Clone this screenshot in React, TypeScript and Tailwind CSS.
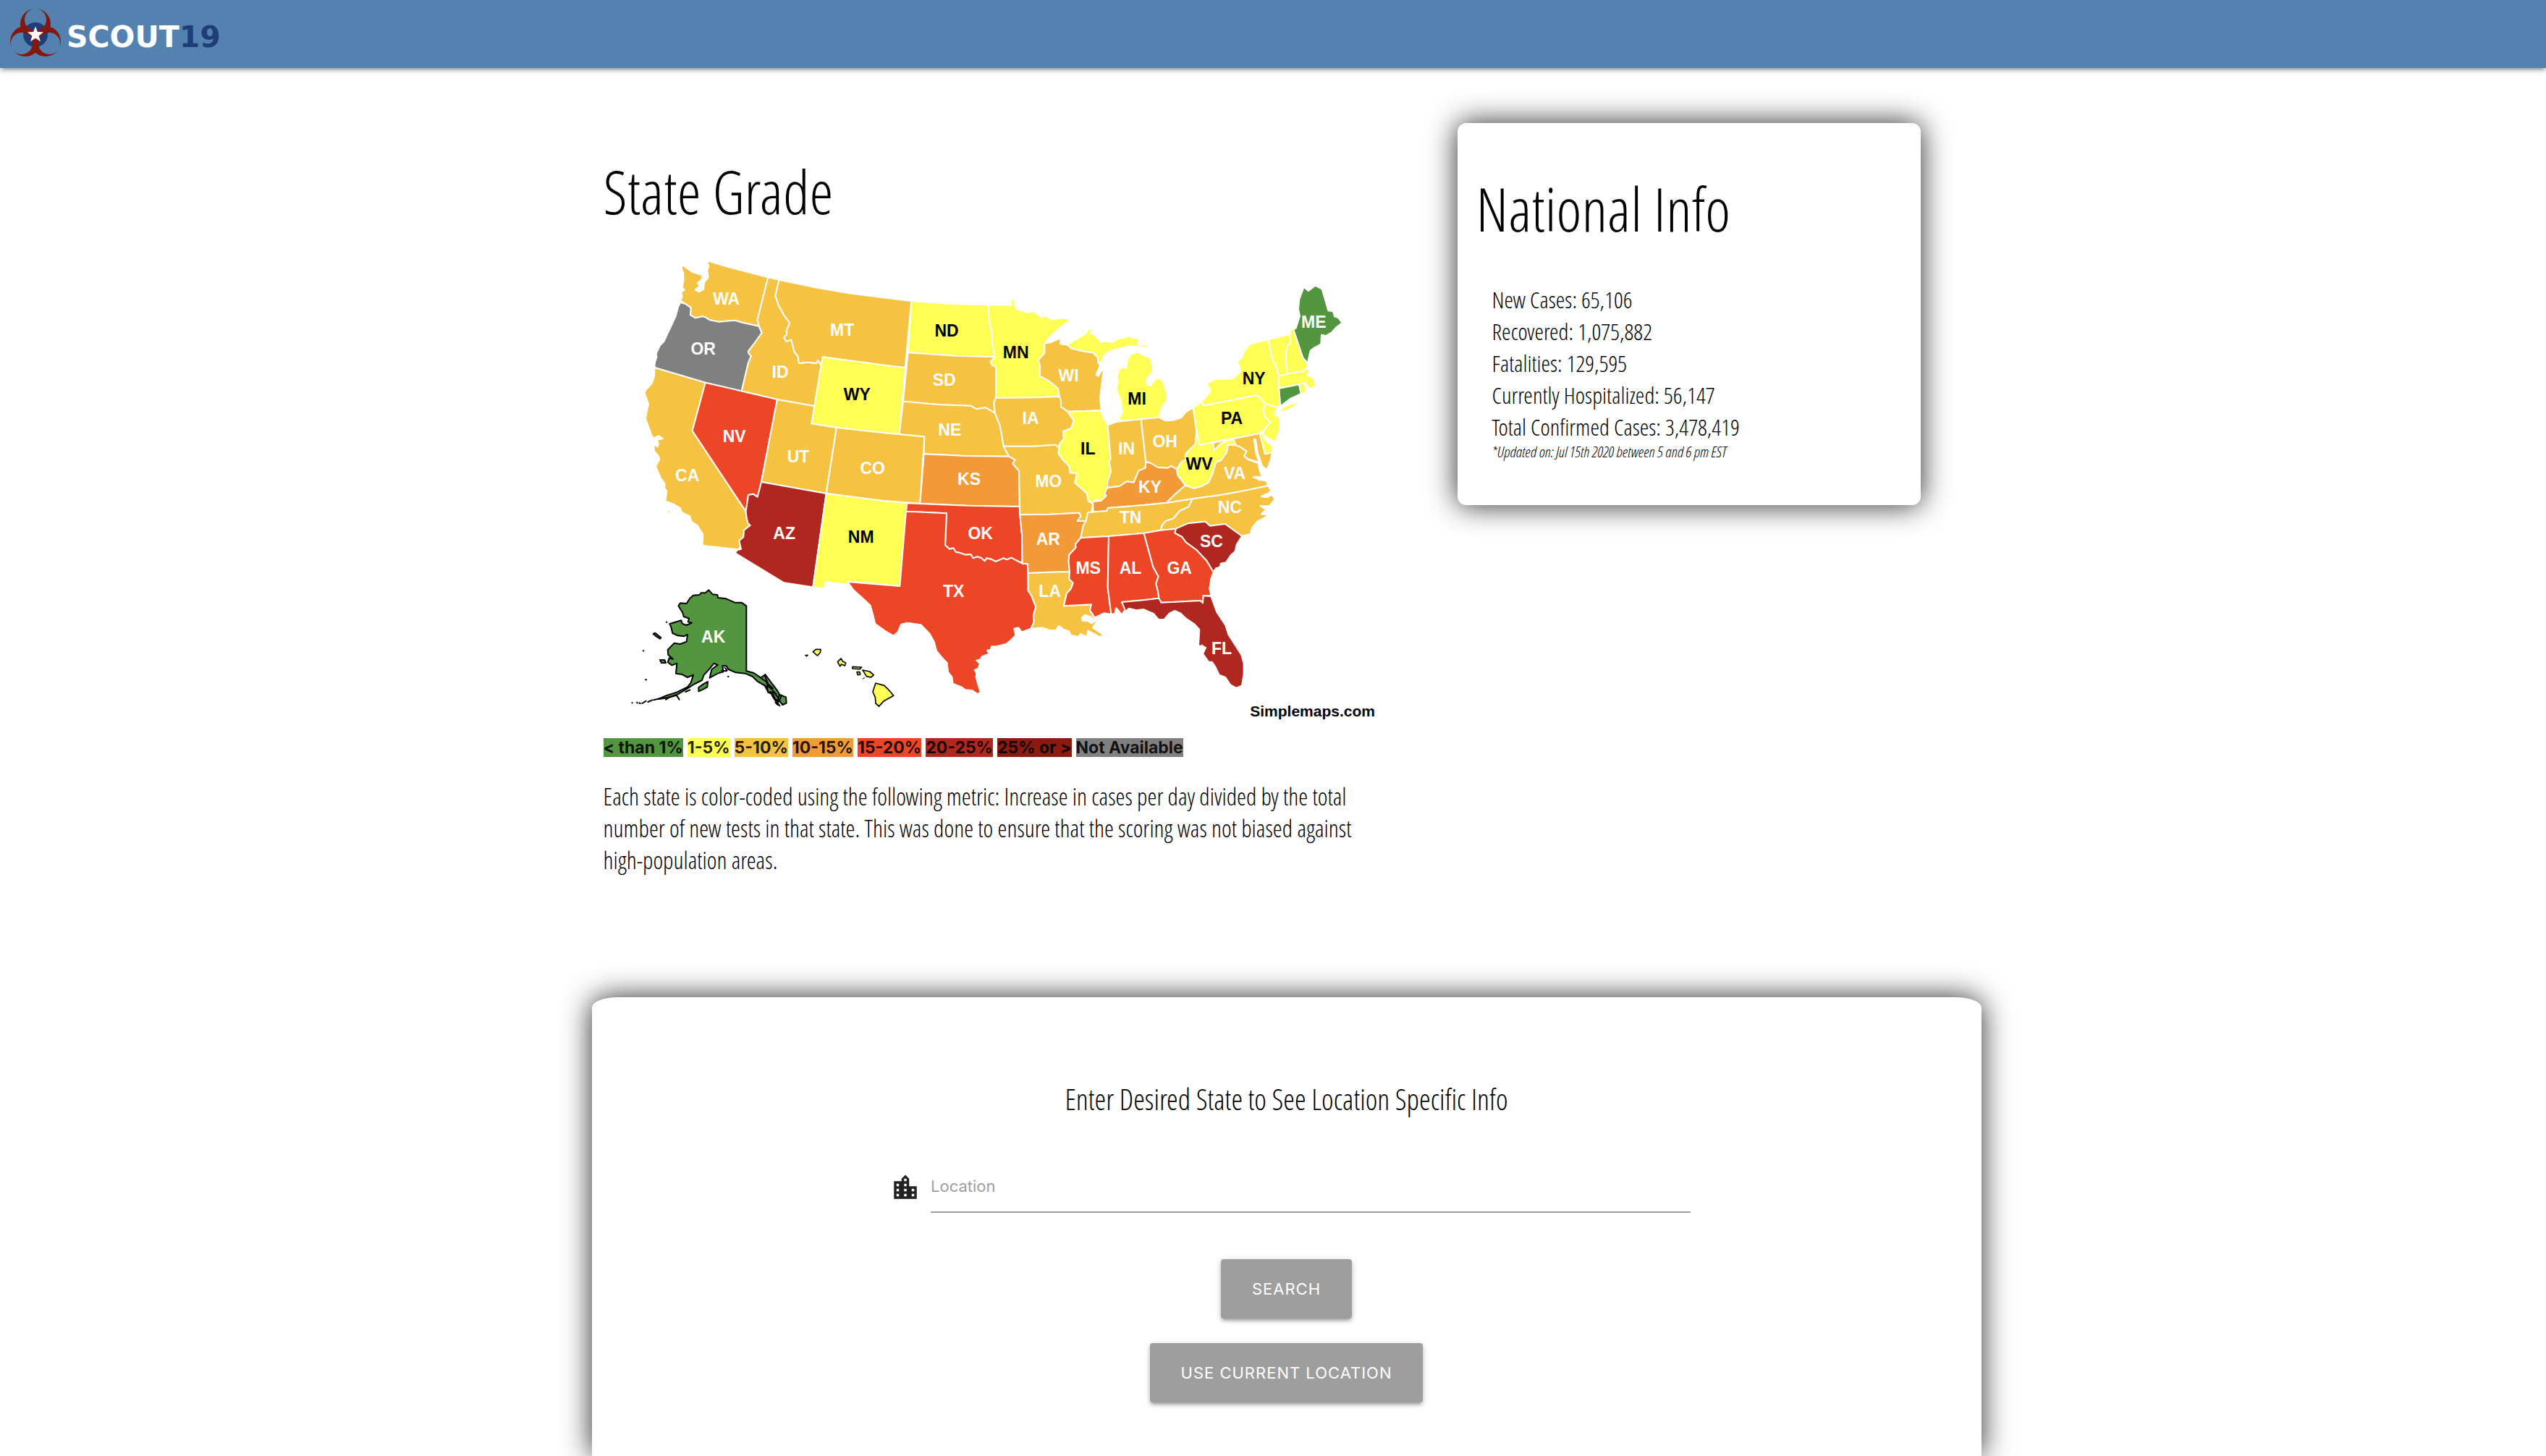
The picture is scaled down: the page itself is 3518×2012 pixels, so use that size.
import React from "react";
import { MdLocationCity } from "react-icons/md";

type Tone = "green" | "yellow" | "amber" | "orange" | "red" | "crimson" | "gray";

const FILL: Record<Tone, string> = {
  green: "fill-[#52963f]",
  yellow: "fill-[#ffff54]",
  amber: "fill-[#f5c242]",
  orange: "fill-[#f39a38]",
  red: "fill-[#ec4627]",
  crimson: "fill-[#b0271f]",
  gray: "fill-[#808080]",
};

// Outline points are in map units: three per pixel at the map's natural width.
type Area = { id: string; tone: Tone; points: string; label?: [number, number]; dark?: boolean };

const AREAS: Area[] = [
  { id: "WA", tone: "amber", label: [431, 242], points: "248,76 262,88 290,108 330,120 330,138 312,152 320,166 302,182 318,190 336,180 340,150 356,130 352,100 358,84 350,60 420,82 604,130 560,305 566,332 500,318 466,308 430,311 400,314 360,306 346,296 334,292 302,298 282,286 284,256 262,240 240,226 248,210 244,190 258,182 248,172 254,140 252,110 246,96" },
  { id: "OR", tone: "gray", label: [335, 450], points: "240,234 262,240 284,256 282,286 302,298 334,292 346,296 360,306 400,314 430,311 466,308 500,318 566,332 578,360 548,402 522,436 524,446 534,456 522,484 494,602 344,566 134,504 134,486 142,460 140,446 156,412 172,396 184,370 204,328 222,288 230,256" },
  { id: "ID", tone: "amber", label: [654, 545], points: "604,130 650,140 634,206 648,246 672,290 694,318 680,352 682,366 670,380 680,396 700,388 706,412 712,436 728,458 732,486 770,482 804,486 810,474 824,494 796,664 642,636 494,602 522,484 534,456 524,446 522,436 548,402 578,360 566,332 560,305" },
  { id: "MT", tone: "amber", label: [911, 371], points: "650,140 800,172 940,196 1080,214 1198,228 1172,504 1110,497 830,460 824,494 810,474 804,486 770,482 732,486 728,458 712,436 706,412 700,388 680,396 670,380 682,366 680,352 694,318 672,290 648,246 634,206" },
  { id: "CA", tone: "amber", label: [269, 974], points: "134,504 344,566 290,766 512,1100 514,1120 520,1148 530,1158 504,1178 502,1206 484,1222 490,1246 480,1258 336,1242 332,1236 334,1196 312,1160 286,1142 280,1120 246,1104 240,1086 212,1070 178,1057 184,1016 174,1000 176,986 158,960 138,914 154,884 148,868 132,850 130,824 146,832 150,818 142,804 168,798 150,786 132,796 120,784 116,770 96,716 102,680 108,656 92,610 96,598 122,570 132,540" },
  { id: "NV", tone: "red", label: [464, 814], points: "344,566 642,636 576,978 568,1010 560,1040 542,1028 522,1032 518,1060 512,1100 290,766" },
  { id: "UT", tone: "amber", label: [729, 896], points: "642,636 796,664 784,736 888,752 845,1026 576,978" },
  { id: "CO", tone: "amber", label: [1037, 944], points: "888,752 1110,777 1148,780 1252,790 1234,1067 1080,1056 845,1026" },
  { id: "AZ", tone: "crimson", label: [671, 1215], points: "576,978 845,1026 790,1414 670,1396 468,1273 476,1260 492,1256 484,1222 502,1206 504,1178 530,1158 520,1148 514,1120 512,1100 518,1060 522,1032 542,1028 560,1040 568,1010" },
  { id: "NM", tone: "yellow", dark: true, label: [989, 1230], points: "845,1026 1080,1056 1180,1066 1150,1410 934,1390 938,1404 840,1392 838,1420 790,1414" },
  { id: "ND", tone: "yellow", dark: true, label: [1344, 374], points: "1198,228 1360,240 1516,244 1518,300 1530,350 1534,410 1544,460 1380,455 1184,442" },
  { id: "SD", tone: "amber", label: [1334, 579], points: "1184,442 1380,455 1544,460 1526,480 1532,492 1548,502 1548,628 1540,650 1544,692 1506,670 1468,676 1444,662 1320,658 1164,644" },
  { id: "NE", tone: "amber", label: [1357, 785], points: "1164,644 1320,658 1444,662 1468,676 1506,670 1544,692 1564,740 1572,780 1580,828 1602,872 1420,870 1250,862 1252,790 1148,780" },
  { id: "WY", tone: "yellow", dark: true, label: [973, 640], points: "830,460 1110,497 1172,504 1148,780 1110,777 888,752 784,736 796,664" },
  { id: "KS", tone: "orange", label: [1437, 991], points: "1250,862 1420,870 1602,872 1628,886 1618,902 1644,932 1646,1080 1430,1076 1234,1067" },
  { id: "OK", tone: "red", label: [1484, 1215], points: "1180,1066 1430,1076 1646,1080 1648,1114 1656,1196 1656,1314 1630,1302 1612,1292 1594,1300 1580,1294 1548,1308 1528,1298 1510,1294 1502,1306 1486,1292 1470,1288 1454,1294 1444,1278 1422,1280 1400,1272 1382,1268 1372,1252 1356,1256 1338,1240 1344,1108 1176,1100" },
  { id: "TX", tone: "red", label: [1373, 1454], points: "1176,1100 1344,1108 1338,1240 1356,1256 1372,1252 1382,1268 1400,1272 1422,1280 1444,1278 1454,1294 1470,1288 1486,1292 1502,1306 1510,1294 1528,1298 1548,1308 1580,1294 1594,1300 1612,1292 1630,1302 1658,1316 1680,1318 1682,1428 1696,1450 1714,1496 1704,1530 1706,1560 1694,1586 1655,1600 1642,1582 1624,1586 1630,1614 1610,1634 1590,1650 1550,1660 1530,1660 1526,1674 1512,1676 1520,1690 1490,1702 1484,1714 1468,1718 1482,1732 1474,1752 1460,1758 1468,1770 1466,1786 1472,1810 1484,1848 1474,1858 1450,1842 1422,1840 1406,1828 1370,1814 1366,1786 1350,1766 1346,1728 1328,1710 1302,1678 1292,1640 1274,1608 1238,1570 1182,1562 1156,1568 1142,1600 1124,1616 1090,1596 1048,1566 1038,1526 1028,1490 998,1462 958,1426 934,1392 1150,1410" },
  { id: "MN", tone: "yellow", dark: true, label: [1631, 465], points: "1516,244 1612,246 1612,218 1624,222 1632,260 1680,276 1704,270 1740,296 1754,290 1786,306 1810,298 1860,303 1820,334 1770,378 1750,406 1750,444 1724,472 1732,500 1730,538 1770,560 1806,590 1812,624 1720,628 1548,630 1548,502 1532,492 1526,480 1544,460 1534,410 1530,350 1518,300" },
  { id: "IA", tone: "amber", label: [1692, 738], points: "1548,630 1720,628 1812,624 1818,640 1818,666 1846,686 1872,724 1860,756 1828,768 1830,800 1812,820 1810,836 1796,824 1700,830 1580,830 1572,780 1564,740 1544,692 1540,650" },
  { id: "MO", tone: "amber", label: [1766, 1000], points: "1580,830 1700,830 1796,824 1810,836 1808,860 1824,884 1852,912 1856,940 1884,942 1876,982 1900,1002 1926,1026 1932,1058 1950,1068 1946,1100 1926,1120 1922,1140 1886,1140 1900,1120 1894,1106 1770,1112 1648,1114 1644,932 1618,902 1628,886 1602,872" },
  { id: "AR", tone: "orange", label: [1765, 1238], points: "1648,1114 1770,1112 1894,1106 1900,1120 1886,1140 1922,1140 1910,1160 1906,1180 1900,1210 1878,1236 1880,1250 1852,1280 1850,1310 1854,1350 1770,1352 1682,1356 1680,1318 1658,1316 1656,1196" },
  { id: "LA", tone: "amber", label: [1772, 1454], points: "1682,1356 1770,1352 1854,1350 1852,1380 1868,1396 1860,1420 1842,1440 1830,1492 1944,1486 1938,1510 1952,1532 1966,1558 1950,1582 1992,1610 1982,1622 1930,1594 1926,1620 1900,1608 1890,1620 1860,1614 1850,1596 1830,1590 1810,1574 1796,1594 1770,1592 1740,1582 1694,1586 1706,1560 1704,1530 1714,1496 1696,1450 1682,1428" },
  { id: "WI", tone: "amber", label: [1850, 560], points: "1750,404 1780,398 1816,382 1816,406 1848,410 1860,424 1910,436 1950,442 1970,460 1972,482 1980,496 1964,534 1972,540 1996,498 1990,550 1980,630 1986,682 1846,686 1818,666 1818,640 1812,624 1806,590 1770,560 1730,538 1732,500 1724,472 1750,444" },
  { id: "MI-upper", tone: "yellow", points: "1846,408 1880,388 1920,363 1930,348 1956,334 1940,360 1960,370 1984,398 2006,394 2030,400 2050,386 2086,378 2100,372 2118,382 2140,382 2138,404 2148,414 2110,414 2080,420 2030,432 2000,448 1984,484 1974,482 1970,460 1950,442 1910,436 1860,424" },
  { id: "MI", tone: "yellow", dark: true, label: [2133, 657], points: "2056,724 2072,690 2066,640 2048,595 2054,560 2050,540 2060,512 2074,500 2088,508 2094,470 2108,448 2140,438 2160,454 2188,463 2198,500 2196,525 2176,545 2174,573 2190,580 2204,556 2226,546 2240,558 2258,610 2258,640 2238,665 2224,710 2150,718" },
  { id: "IL", tone: "yellow", dark: true, label: [1930, 863], points: "1846,686 1984,682 1994,710 2012,742 2024,880 2018,900 2026,932 2010,980 2010,1002 2000,1025 2006,1036 1984,1056 1960,1050 1950,1068 1932,1058 1926,1026 1900,1002 1876,982 1884,942 1856,940 1852,912 1824,884 1808,860 1810,836 1812,820 1830,800 1828,768 1860,756 1872,724" },
  { id: "IN", tone: "amber", label: [2090, 863], points: "2012,742 2050,728 2150,718 2170,895 2168,920 2140,932 2120,980 2090,976 2060,996 2030,1000 2010,1002 2010,980 2026,932 2018,900 2024,880" },
  { id: "OH", tone: "amber", label: [2249, 834], points: "2150,718 2224,710 2250,724 2284,722 2316,712 2336,688 2366,670 2380,765 2376,820 2336,860 2334,886 2316,896 2298,926 2276,912 2260,920 2220,918 2190,900 2170,895" },
  { id: "KY", tone: "orange", label: [2187, 1022], points: "2170,895 2190,900 2220,918 2260,920 2276,912 2298,926 2302,950 2334,992 2290,1030 2256,1064 2160,1074 2012,1086 2008,1098 1952,1104 1950,1060 1984,1056 2006,1036 2000,1025 2010,1002 2030,1000 2060,996 2090,976 2120,980 2140,932 2168,920" },
  { id: "TN", tone: "amber", label: [2106, 1150], points: "1930,1104 2008,1098 2012,1086 2160,1074 2256,1064 2364,1048 2346,1082 2310,1098 2284,1130 2252,1140 2236,1160 2232,1178 2162,1190 2016,1203 1900,1210 1906,1180 1910,1160 1922,1140 1926,1120" },
  { id: "VA", tone: "amber", label: [2538, 965], points: "2256,1064 2364,1048 2480,1032 2560,1018 2676,994 2672,972 2640,970 2620,956 2652,958 2640,926 2636,900 2590,882 2578,870 2588,850 2560,832 2544,826 2510,824 2505,855 2480,890 2460,896 2446,945 2430,980 2400,996 2368,1004 2334,992 2290,1030" },
  { id: "MD", tone: "amber", points: "2448,816 2642,776 2664,862 2694,856 2686,890 2672,928 2650,910 2636,900 2590,882 2578,870 2588,850 2560,832 2544,826 2516,804 2480,820 2452,848" },
  { id: "WV", tone: "yellow", dark: true, label: [2391, 928], points: "2382,765 2392,824 2448,814 2452,848 2480,820 2516,804 2534,804 2544,826 2510,824 2505,855 2480,890 2460,896 2446,945 2430,980 2400,996 2368,1004 2334,992 2302,950 2298,926 2316,896 2334,886 2336,860 2376,820" },
  { id: "NC", tone: "amber", label: [2518, 1106], points: "2364,1048 2480,1032 2560,1018 2676,994 2690,1014 2676,1026 2648,1038 2672,1042 2692,1030 2704,1050 2682,1078 2644,1078 2668,1092 2648,1112 2678,1112 2662,1126 2632,1142 2610,1168 2604,1194 2566,1202 2498,1152 2436,1160 2416,1142 2344,1150 2294,1172 2232,1178 2236,1160 2252,1140 2284,1130 2310,1098 2346,1082" },
  { id: "SC", tone: "crimson", label: [2442, 1248], points: "2294,1172 2344,1150 2416,1142 2436,1160 2498,1152 2568,1202 2546,1238 2540,1266 2522,1282 2502,1312 2480,1316 2478,1334 2460,1336 2450,1352 2422,1305 2380,1260 2336,1228 2320,1206 2290,1190" },
  { id: "MS", tone: "red", label: [1931, 1359], points: "1900,1210 2016,1203 2012,1415 2026,1526 1996,1522 1958,1540 1938,1510 1944,1486 1830,1492 1842,1440 1860,1420 1868,1396 1852,1380 1854,1350 1850,1310 1852,1280 1880,1250 1878,1236" },
  { id: "AL", tone: "red", label: [2106, 1359], points: "2016,1203 2162,1190 2200,1330 2222,1370 2212,1400 2220,1430 2224,1460 2160,1468 2070,1476 2086,1506 2070,1528 2054,1508 2046,1500 2042,1524 2026,1526 2012,1415" },
  { id: "GA", tone: "red", label: [2309, 1359], points: "2162,1190 2232,1178 2294,1172 2290,1190 2320,1206 2336,1228 2380,1260 2422,1305 2450,1352 2440,1380 2434,1420 2440,1450 2408,1450 2406,1480 2396,1470 2234,1478 2224,1460 2220,1430 2212,1400 2222,1370 2200,1330" },
  { id: "FL", tone: "crimson", label: [2484, 1692], points: "2070,1476 2160,1468 2224,1460 2234,1478 2396,1470 2406,1480 2408,1450 2440,1452 2464,1518 2500,1572 2512,1610 2566,1695 2576,1730 2576,1775 2568,1822 2544,1832 2520,1818 2500,1788 2474,1778 2460,1748 2444,1724 2430,1724 2406,1690 2418,1665 2388,1656 2392,1590 2372,1568 2334,1542 2314,1522 2290,1512 2268,1522 2246,1548 2222,1548 2202,1524 2184,1516 2160,1506 2130,1510 2100,1502 2086,1514" },
  { id: "DE", tone: "yellow", points: "2642,776 2656,774 2662,800 2698,832 2692,856 2664,862" },
  { id: "NJ", tone: "yellow", points: "2666,654 2714,666 2704,700 2726,710 2726,760 2706,814 2656,784 2660,760 2686,730 2660,704 2656,676" },
  { id: "NY", tone: "yellow", dark: true, label: [2618, 573], points: "2402,644 2438,604 2424,568 2460,552 2530,550 2562,522 2558,500 2550,480 2570,460 2578,434 2604,406 2678,388 2688,440 2698,482 2708,490 2720,540 2722,588 2732,652 2716,668 2666,654 2652,638 2630,618 2406,662" },
  { id: "NY-long-island", tone: "yellow", points: "2716,692 2750,662 2806,646 2788,664 2750,684" },
  { id: "PA", tone: "yellow", dark: true, label: [2526, 737], points: "2366,670 2402,644 2406,662 2630,618 2652,638 2666,654 2656,676 2660,704 2686,730 2660,760 2642,776 2392,824 2380,765" },
  { id: "VT", tone: "yellow", points: "2678,388 2766,366 2770,400 2754,420 2750,470 2756,530 2720,540 2708,490 2698,482 2688,440" },
  { id: "NH", tone: "yellow", points: "2766,366 2772,344 2784,346 2822,465 2840,485 2838,502 2820,520 2756,530 2750,470 2754,420 2770,400" },
  { id: "MA", tone: "yellow", points: "2720,540 2756,530 2820,520 2840,504 2846,520 2838,536 2864,546 2872,570 2888,576 2866,584 2850,594 2828,566 2805,574 2722,588" },
  { id: "CT", tone: "green", points: "2722,590 2805,574 2814,612 2770,632 2728,664" },
  { id: "RI", tone: "yellow", points: "2805,574 2828,566 2836,606 2814,614" },
  { id: "ME", tone: "green", label: [2866, 339], points: "2782,346 2792,340 2808,290 2802,262 2806,220 2825,170 2844,186 2872,164 2900,178 2926,268 2946,271 2952,292 2966,296 2984,318 2958,338 2940,358 2916,372 2898,368 2896,406 2868,422 2852,434 2841,484 2822,465" },
];

const ALASKA =
  "358,466 374,484 394,486 396,498 430,502 466,518 494,518 514,532 514,802 545,810 574,830 592,816 610,840 640,880 652,900 678,910 680,935 664,942 650,925 640,936 625,900 605,890 590,862 560,845 540,825 510,812 470,808 440,795 430,780 415,780 418,805 395,812 362,830 370,795 395,777 380,770 355,800 338,818 330,840 300,855 260,880 230,898 190,912 150,918 180,904 225,890 270,868 284,850 294,818 270,828 245,815 222,812 226,770 205,778 188,765 194,748 210,752 190,735 188,714 215,686 240,690 266,680 270,650 255,658 230,655 208,645 202,620 196,606 244,592 248,605 265,612 288,602 272,598 276,584 254,576 250,560 232,532 240,520 266,522 280,500 294,488 320,486 326,478 344,478";

const ALASKA_ISLANDS = [
  "316,870 335,856 354,846 352,868 330,880 316,886",
  "128,648 136,644 160,664 156,668 140,658",
  "156,756 175,756 180,768 162,768",
];

const HAWAII = [
  "790,722 802,712 822,712 820,726 808,738",
  "892,764 906,750 914,762 926,768 922,780 908,774 902,782",
  "954,784 992,786 984,794 954,792",
  "972,806 984,806 986,816 976,818",
  "996,798 1025,804 1042,818 1030,828 1012,824",
  "1050,852 1086,862 1104,880 1124,904 1084,926 1064,948 1050,936 1048,910 1038,888",
];

function StateMap() {
  return (
    <svg
      viewBox="-78 0 3198 1980"
      role="img"
      aria-label="Map of state grades"
      className="block w-full font-['Liberation_Sans',sans-serif]"
    >
      <g className="stroke-white" strokeWidth={6} strokeLinejoin="round">
        {AREAS.map((a) => (
          <polygon key={a.id} points={a.points} className={FILL[a.tone]} />
        ))}
      </g>
      {/* Lake Pontchartrain, the inlets beside it and Chesapeake Bay */}
      <g className="fill-white stroke-white" strokeLinejoin="round" strokeLinecap="round">
        <path d="M1904 1540l14-12 24 8 18 18-14 12-16-10-24-2z" strokeWidth={4} />
        <path d="M2622 804l8 54 14 40 12 46 12 28" fill="none" strokeWidth={13} />
        <path d="M2616 958l40 12M2634 896l-40-12" fill="none" strokeWidth={8} />
        <path d="M2402 1656l14 10-8 18M2466 1336l18-10" fill="none" strokeWidth={8} />
      </g>
      <path d="M2144 414l18 2M2166 414h8" className="stroke-[#ffff54]" strokeWidth={4} />
      <path d="M188 1102h6" className="stroke-[#f5c242]" strokeWidth={4} />

      <g transform="translate(0 960)" className="stroke-black" strokeWidth={6} strokeLinejoin="round" strokeLinecap="round">
        <polygon points={ALASKA} className="fill-[#52963f]" />
        {ALASKA_ISLANDS.map((p) => (
          <polygon key={p} points={p} className="fill-[#52963f]" />
        ))}
        <path d="M190 912l34-10 12 18M180 920l10-6M160 914l-30 8M124 922l-18 8M98 926l-16 10M74 936l-4-2M60 932l2 2M40 934h1M86 718h2M96 838h3M182 599h2M438 825h2M262 888l18-8M412 800l20 2M424 788l10 10" fill="none" strokeWidth={6} />
        <path d="M576 832l20 14 8 22M590 820l14 36 20 18M584 858l16 10 4 22M604 862l34 36M612 888l20 6 14 20M620 902l12 20M628 914l20 14M634 932l10 10M650 902l-8 30 10 14M660 902l-8 20" fill="none" strokeWidth={6} />
        {HAWAII.map((p) => (
          <polygon key={p} points={p} className="fill-[#ffff54]" strokeWidth={5} />
        ))}
        <path d="M758 736l12-1-6 6zM996 834l8-4" strokeWidth={3} />
      </g>

      <g fontSize={69} fontWeight={700} textAnchor="middle">
        {AREAS.filter((a) => a.label).map((a) => (
          <text key={a.id} x={a.label![0]} y={a.label![1]} className={a.dark ? "fill-black" : "fill-white"}>
            {a.id}
          </text>
        ))}
        <text x={377} y={1643} className="fill-white">
          AK
        </text>
      </g>
      <a href="https://simplemaps.com">
        <text x={3120} y={1950} fontSize={63} fontWeight={700} textAnchor="end" className="fill-black">
          Simplemaps.com
        </text>
      </a>
    </svg>
  );
}

function Logo() {
  return (
    <a href="/" aria-label="Scout19" className="flex items-center gap-[7px]">
      <svg viewBox="13 11 72 72" className="h-[72px] w-[72px]" aria-hidden="true">
        <defs>
          <mask id="lobes" maskUnits="userSpaceOnUse" x="0" y="0" width="100" height="100">
            <rect width="100" height="100" fill="white" />
            {[0, 120, 240].map((r) => (
              <g key={r} transform={`rotate(${r} 49 49)`}>
                <circle cx="49" cy="27" r="15" fill="black" />
                <rect x="46" y="8" width="6" height="12" fill="black" />
              </g>
            ))}
          </mask>
        </defs>
        <circle cx="49" cy="48" r="17" className="fill-[#1f3d77]" />
        <g mask="url(#lobes)" className="fill-[#821810]">
          {[0, 120, 240].map((r) => (
            <circle key={r} cx="49" cy="33" r="21" transform={`rotate(${r} 49 49)`} />
          ))}
        </g>
        <path
          d="M49 36.500l2.900 7.500 8.100.500-6.300 5 2.200 7.800-6.900-4.500-6.900 4.500 2.200-7.800-6.300-5 8.100-.500z"
          className="fill-white"
        />
      </svg>
      <span className="mt-2 font-['DejaVu_Sans',sans-serif] text-[41px] leading-none font-bold text-white">
        SCOUT<span className="text-[#1f3d77]">19</span>
      </span>
    </a>
  );
}

const LEGEND = [
  { text: "< than 1%", color: "bg-[#52963f]" },
  { text: "1-5%", color: "bg-[#ffff54]" },
  { text: "5-10%", color: "bg-[#f5c242]" },
  { text: "10-15%", color: "bg-[#f39a38]" },
  { text: "15-20%", color: "bg-[#ec4627]" },
  { text: "20-25%", color: "bg-[#b0271f]" },
  { text: "25% or >", color: "bg-[#8b1a10]" },
  { text: "Not Available", color: "bg-[#808080]" },
];

const STATS = [
  "New Cases: 65,106",
  "Recovered: 1,075,882",
  "Fatalities: 129,595",
  "Currently Hospitalized: 56,147",
  "Total Confirmed Cases: 3,478,419",
];

const BUTTON =
  "h-[82px] cursor-pointer rounded-[4px] bg-[#9e9e9e] px-[43px] font-[Inter,sans-serif] text-[22px] tracking-[1px] text-white uppercase shadow-[0_4px_4px_rgba(0,0,0,0.14),0_6px_2px_-4px_rgba(0,0,0,0.12),0_2px_10px_rgba(0,0,0,0.2)]";

export default function App() {
  return (
    <div className="flex min-h-screen flex-col overflow-x-hidden bg-white font-['Open_Sans_Condensed_Light','Open_Sans_Condensed','Roboto_Condensed',sans-serif] text-black">
      <header className="flex h-[94px] items-center bg-[#5382b1] px-[13px] shadow-[0_4px_4px_rgba(0,0,0,0.14),0_6px_2px_-4px_rgba(0,0,0,0.12),0_2px_10px_rgba(0,0,0,0.2)]">
        <Logo />
      </header>

      <div className="flex flex-1 flex-col pl-[37px]">
        <main className="mx-auto flex w-full max-w-[1920px] flex-1 flex-col">
          <div className="flex items-start justify-between pt-[76px] pr-[84px] pl-4">
            <section className="w-[1066px] pt-12">
              <h1 className="text-[84px] leading-[92px]">State Grade</h1>
              <div className="mt-[30px]">
                <StateMap />
              </div>
              <ul className="mt-5 flex gap-[6px] font-[Inter,sans-serif] text-[23px] leading-[26px] font-bold text-black/87">
                {LEGEND.map((l) => (
                  <li key={l.text} className={l.color}>
                    {l.text}
                  </li>
                ))}
              </ul>
              <p className="mt-[33px] text-[33px] leading-[44px]">
                Each state is color-coded using the following metric: Increase in cases per day divided by the total
                number of new tests in that state. This was done to ensure that the scoring was not biased against
                high-population areas.
              </p>
            </section>

            <aside className="w-[640px] rounded-xl bg-white px-[26px] pt-[72px] pb-[62px] shadow-[0_0_40px_rgba(0,0,0,0.85)]">
              <h2 className="text-[84px] leading-[92px]">National Info</h2>
              <ul className="mt-[58px] pl-[22px] text-[32px] leading-[44px]">
                {STATS.map((s) => (
                  <li key={s}>{s}</li>
                ))}
              </ul>
              <p className="pl-[22px] text-[21px] leading-6 italic">
                *Updated on: Jul 15th 2020 between 5 and 6 pm EST
              </p>
            </aside>
          </div>

          <section className="mt-[167px] flex flex-1 flex-col items-center bg-white pt-[119px] pb-[74px] [border-radius:38px_38px_0_0/14px_14px_0_0] shadow-[0_0_40px_rgba(0,0,0,0.85)]">
            <h3 className="text-[40px] leading-[44px]">Enter Desired State to See Location Specific Info</h3>
            <form className="mt-[79px] flex w-[1117px] flex-col items-center" onSubmit={(e) => e.preventDefault()}>
              <div className="flex w-full items-start pl-[10px]">
                <label htmlFor="location" aria-label="Location" className="w-[57px] text-[#212121]">
                  <MdLocationCity className="h-[42px] w-11" aria-hidden="true" />
                </label>
                <input
                  id="location"
                  type="text"
                  placeholder="Location"
                  className="h-14 flex-1 border-b-2 border-[#9e9e9e] bg-transparent pb-4 font-[Inter,sans-serif] text-[22px] outline-none placeholder:text-[#9e9e9e]"
                />
              </div>
              <button type="submit" className={`mt-16 ${BUTTON}`}>
                Search
              </button>
              <button type="button" className={`mt-[34px] ${BUTTON}`}>
                Use Current Location
              </button>
            </form>
          </section>
        </main>
      </div>
    </div>
  );
}
